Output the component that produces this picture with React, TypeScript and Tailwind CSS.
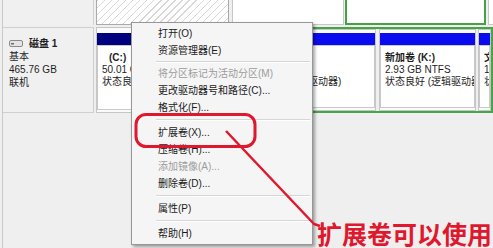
import React from "react";

type Item = { label: string; disabled?: boolean } | "sep" | "sepS";

const menu: Item[] = [
  { label: "打开(O)" },
  { label: "资源管理器(E)" },
  "sepS",
  { label: "将分区标记为活动分区(M)", disabled: true },
  { label: "更改驱动器号和路径(C)..." },
  { label: "格式化(F)..." },
  "sep",
  { label: "扩展卷(X)..." },
  { label: "压缩卷(H)..." },
  { label: "添加镜像(A)...", disabled: true },
  { label: "删除卷(D)..." },
  "sep",
  { label: "属性(P)" },
  "sep",
  { label: "帮助(H)" },
];

function Partition({
  lines,
  bar,
  className,
  first,
}: {
  lines: string[];
  bar: string;
  className: string;
  first?: string;
}) {
  return (
    <div className={`flex min-w-0 flex-col border border-[#c6c6c6] bg-[#fafafa] pb-[2px] ${className}`}>
      <div className={`h-[12px] shrink-0 ${bar}`} />
      <div className="min-w-0 flex-1 overflow-hidden border border-[#c9c9c9] bg-white pl-[4px] pt-[6px] leading-[12px] whitespace-nowrap">
        <div className={`font-bold ${first ?? ""}`}>{lines[0]}</div>
        <div>{lines[1]}</div>
        <div>{lines[2]}</div>
      </div>
    </div>
  );
}

export default function App() {
  return (
    <div className="relative h-[248px] w-[493px] overflow-hidden bg-[#efefef] font-['Liberation_Sans','Noto_Sans_CJK_SC',sans-serif] text-[10px] text-[#1e1e1e]">
      <div className="ml-[2px] flex h-full flex-col border-l border-[#c9c9c9]">
        {/* previous disk, bottom part */}
        <div className="flex h-[25px] shrink-0">
          <div className="w-[91px] shrink-0 border-r border-[#d2d2d2] bg-[#f0f0f0]" />
          <div className="ml-[2px] w-[133px] shrink-0 border border-t-0 border-[#a9a9a9] bg-[repeating-linear-gradient(135deg,#d6d6d6_0px,#d6d6d6_1px,#ffffff_1px,#ffffff_5px)]" />
          <div className="ml-[3px] w-[112px] shrink-0 border border-t-0 border-[#c8c8c8] bg-white" />
          <div className="ml-[1px] w-[141px] shrink-0 border-2 border-t-0 border-[#46a046] bg-white" />
          <div className="ml-[2px] min-w-0 flex-1 border-b border-l border-[#c8c8c8] bg-white" />
        </div>

        <div className="h-[2px] shrink-0" />

        {/* disk 1 */}
        <div className="flex h-[86px] shrink-0">
          <div className="w-[91px] shrink-0 border-y border-r border-[#cfcfcf] bg-[#f0f0f0] pl-[6px] pt-[9px] leading-[13px] whitespace-nowrap">
            <div className="flex items-center gap-[6px]">
              <svg width="14" height="7" viewBox="0 0 14 7">
                <rect x="0.5" y="0.5" width="13" height="6" rx="1.5" fill="#e4e4e4" stroke="#8a8a8a" />
                <rect x="2" y="3" width="3" height="1.5" fill="#6a6a6a" />
              </svg>
              <span className="font-bold">磁盘 1</span>
            </div>
            <div>基本</div>
            <div>465.76 GB</div>
            <div>联机</div>
          </div>

          <Partition
            className="ml-[2px] w-[138px] shrink-0 pt-[5px]"
            bar="bg-[#00007e]"
            lines={["(C:)", "50.01 GB NTFS", "状态良好 (系统)"]}
            first="ml-[7px]"
          />

          <div className="flex min-w-0 flex-1 border-2 border-[#48a448]">
            <Partition
              className="w-[140px] shrink-0 pt-[3px]"
              bar="bg-[#0b0bf0]"
              lines={["新加卷 (D:)", "98.34 GB NTFS", "状态良好 (逻辑驱动器)"]}
            />
            <Partition
              className="ml-[3px] w-[97px] shrink-0 pt-[3px]"
              bar="bg-[#0b0bf0]"
              lines={["新加卷 (K:)", "2.93 GB NTFS", "状态良好 (逻辑驱动器)"]}
            />
            <Partition
              className="ml-[2px] flex-1 pt-[3px]"
              bar="bg-[#0b0bf0]"
              lines={["文档 (E:)", "136.12 GB NTFS", "状态良好 (逻辑驱动器)"]}
            />
          </div>
        </div>

        <div className="flex-1" />
      </div>

      {/* context menu */}
      <div className="absolute left-[131px] top-[22px] w-[182px] border border-[#979797] bg-[#f5f5f5] py-[2px] text-[10px] shadow-[2px_2px_3px_rgba(0,0,0,0.35)]">
        {menu.map((m, i) =>
          m === "sep" || m === "sepS" ? (
            <div key={i} className={`flex items-center ${m === "sep" ? "h-[8px]" : "h-[6px]"}`}>
              <div className="ml-[24px] mr-[2px] h-[2px] flex-1 border-b border-t border-b-white border-t-[#d6d6d6]" />
            </div>
          ) : (
            <div
              key={i}
              className={`flex h-[17px] items-center whitespace-nowrap pl-[26px] ${m.disabled ? "text-[#9c9c9c]" : "text-[#1a1a1a]"}`}
            >
              {m.label}
            </div>
          )
        )}
      </div>

      {/* annotation */}
      <svg className="pointer-events-none absolute left-0 top-0" width="493" height="248" viewBox="0 0 493 248">
        <rect x="136" y="114.5" width="119" height="32" rx="10" fill="none" stroke="#e0182e" strokeWidth="3" />
        <polyline points="226,131 314,224 320,226" fill="none" stroke="#e0182e" strokeWidth="2.5" strokeLinejoin="round" />
      </svg>
      <div className="absolute left-[317px] top-[221px] whitespace-nowrap font-['Noto_Sans_CJK_SC',sans-serif] text-[25px] font-bold leading-none text-[#e0182e]">
        扩展卷可以使用
      </div>
    </div>
  );
}
